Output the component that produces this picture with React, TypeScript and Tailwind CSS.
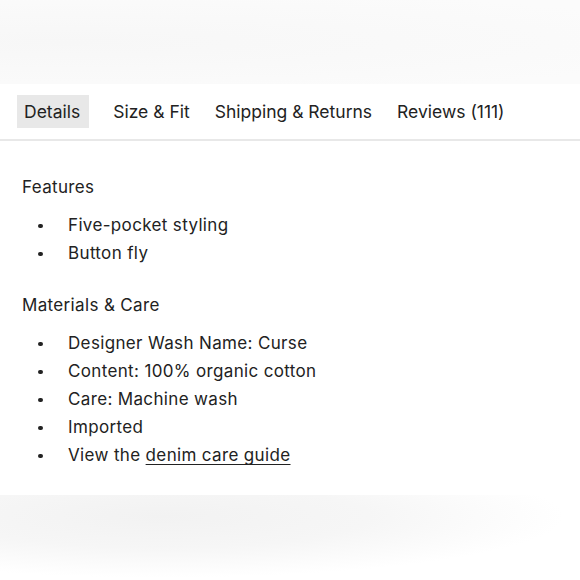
import { useState } from 'react'

const tabs = ['Details', 'Size & Fit', 'Shipping & Returns', 'Reviews (111)']

const features = ['Five-pocket styling', 'Button fly']
const materials = [
  'Designer Wash Name: Curse',
  'Content: 100% organic cotton',
  'Care: Machine wash',
  'Imported',
]

function Bullet({ children }: { children: React.ReactNode }) {
  return (
    <li className="flex h-[28px] items-center">
      <span className="flex w-[46px] pl-[16px]">
        <span className="h-[4.5px] w-[4.5px] rounded-full bg-[#222]" />
      </span>
      <span>{children}</span>
    </li>
  )
}

export default function App() {
  const [active, setActive] = useState('Details')

  return (
    <div
      className="flex h-[580px] w-[580px] flex-col bg-white text-[#222]"
      style={{ fontFamily: 'Inter, "Open Sans", sans-serif' }}
    >
      <div className="h-[84px] bg-[radial-gradient(ellipse_at_12%_50%,#f7f7f7,#f9f9f9_45%,#fbfbfb_90%)]" />

      <div className="flex gap-[11px] border-b-2 border-[#e8e8e8] px-[17px] pt-[11px] pb-[11px]">
        {tabs.map((tab, i) => (
          <button
            key={tab}
            onClick={() => setActive(tab)}
            className={`h-[33px] px-[7px] pt-[2px] text-[17.5px] ${i === 0 ? 'mr-[6px] pr-[9px]' : ''} ${
              active === tab ? 'bg-[#e8e8e8]' : ''
            }`}
          >
            {tab}
          </button>
        ))}
      </div>

      <div className="px-[22px] pt-[34px] text-[17px] tracking-[0.35px]">
        <h3 className="h-[24px] leading-[24px]">Features</h3>
        <ul className="mt-[13px]">
          {features.map((f) => (
            <Bullet key={f}>{f}</Bullet>
          ))}
        </ul>
        <h3 className="mt-[25px] h-[24px] leading-[24px]">Materials &amp; Care</h3>
        <ul className="mt-[13px]">
          {materials.map((m) => (
            <Bullet key={m}>{m}</Bullet>
          ))}
          <Bullet>
            View the{' '}
            <a href="#" className="underline underline-offset-[3px]">
              denim care guide
            </a>
          </Bullet>
        </ul>
      </div>

      <div className="mt-[25px] flex-1 bg-[radial-gradient(ellipse_at_28%_25%,#f2f2f2,#f6f6f6_35%,#ffffff_68%)]" />
    </div>
  )
}
